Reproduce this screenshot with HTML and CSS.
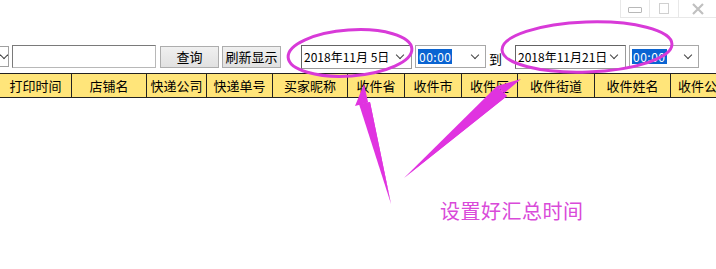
FILE: index.html
```html
<!DOCTYPE html>
<html>
<head>
<meta charset="utf-8">
<link rel="stylesheet" href="styles.css">
</head>
<body>
<div class="page">
  <div class="titlebar">
    <div class="winbtns">
      <div class="wb"><span class="min"></span></div>
      <div class="wb"><span class="rest"></span></div>
      <div class="wb wclose">
        <svg width="14" height="12" viewBox="0 0 14 12"><path d="M2 1 L12 11 M12 1 L2 11" stroke="#c0c0c0" stroke-width="2.2" fill="none"/></svg>
      </div>
    </div>
  </div>
  <div class="toolbar">
    <div class="stub"><span class="chev"></span></div>
    <div class="input"></div>
    <div class="btn b1">查询</div>
    <div class="btn b2">刷新显示</div>
    <div class="date d1"><span class="dtext">2018年11月&nbsp;5日</span><span class="chev"></span></div>
    <div class="time t1"><span class="sel">00:00</span><span class="chev"></span></div>
    <div class="to">到</div>
    <div class="date d2"><span class="dtext">2018年11月21日</span><span class="chev"></span></div>
    <div class="time t2"><span class="sel">00:00</span><span class="chev"></span></div>
  </div>
  <div class="header">
    <div class="hc" style="width:72px">打印时间</div>
    <div class="hc" style="width:75px">店铺名</div>
    <div class="hc" style="width:60px">快递公司</div>
    <div class="hc" style="width:66px">快递单号</div>
    <div class="hc" style="width:75px">买家昵称</div>
    <div class="hc" style="width:57px">收件省</div>
    <div class="hc" style="width:57px">收件市</div>
    <div class="hc" style="width:56px">收件区</div>
    <div class="hc" style="width:77px">收件街道</div>
    <div class="hc" style="width:76px">收件姓名</div>
    <div class="hc last" style="width:80px">收件公司</div>
  </div>
  <svg class="anno" width="716" height="269" viewBox="0 0 716 269">
    <ellipse cx="350" cy="53" rx="62" ry="23" fill="none" stroke="#d83ad8" stroke-width="3" transform="rotate(-4 350 53)"/>
    <ellipse cx="587" cy="47" rx="85" ry="25" fill="none" stroke="#d83ad8" stroke-width="3" transform="rotate(-2 587 47)"/>
    <polygon points="391,204 364,84 355,106 370,102" fill="#e033e0"/>
    <polygon points="391,204 370,102 359,104" fill="#e033e0"/>
    <polygon points="404,178 521,79 497,86 507,96" fill="#e033e0"/>
    <polygon points="404,178 507,96 497,86" fill="#e033e0"/>
  </svg>
  <div class="note">设置好汇总时间</div>
</div>
</body>
</html>
```
FILE: styles.css
```css
html, body {
  margin: 0;
  padding: 0;
  background: #ffffff;
}
.page {
  position: relative;
  width: 716px;
  height: 269px;
  overflow: hidden;
  font-family: "Noto Sans CJK SC", "DejaVu Sans", sans-serif;
  font-size: 12px;
  color: #000;
}
.titlebar {
  height: 18px;
  display: flex;
  justify-content: flex-end;
}
.winbtns {
  display: flex;
  width: 95px;
  height: 17px;
  border-left: 1px solid #e8e8e8;
  border-bottom: 1px solid #e8e8e8;
}
.wb {
  flex: 1;
  display: flex;
  align-items: center;
  justify-content: center;
  border-right: 1px solid #e8e8e8;
}
.wb.wclose { flex: 1.3; border-right: none; }
.min {
  width: 12px;
  height: 4px;
  border: 1px solid #b8b8b8;
  border-radius: 1px;
  margin-top: 3px;
}
.rest {
  width: 8px;
  height: 9px;
  border: 1px solid #d0d0d0;
}
.toolbar {
  display: flex;
  align-items: center;
  height: 25px;
  margin-top: 26px;
}
.chev {
  display: inline-block;
  width: 5px;
  height: 5px;
  border-right: 1px solid #444;
  border-bottom: 1px solid #444;
  transform: rotate(45deg);
  margin-top: -4px;
}
.stub {
  width: 9px;
  height: 21px;
  border: 1px solid #a0a0a0;
  border-left: none;
  display: flex;
  align-items: center;
  justify-content: flex-end;
  overflow: hidden;
  box-sizing: border-box;
}
.stub .chev { margin-right: 1px; }
.input {
  width: 144px;
  height: 23px;
  margin-left: 3px;
  box-sizing: border-box;
  border: 1px solid #7a7a7a;
  border-right-color: #b8b8b8;
  border-bottom-color: #b8b8b8;
  background: #fff;
}
.btn {
  height: 22px;
  box-sizing: border-box;
  border: 1px solid #adadad;
  background: linear-gradient(#f0f0f0, #e1e1e1);
  display: flex;
  align-items: center;
  justify-content: center;
  font-size: 13px;
}
.b1 { width: 59px; margin-left: 4px; }
.b2 { width: 59px; margin-left: 3px; }
.date {
  height: 24px;
  box-sizing: border-box;
  border: 1px solid #646464;
  border-right-color: #9a9a9a;
  border-bottom-color: #9a9a9a;
  display: flex;
  align-items: center;
  justify-content: space-between;
  padding: 0 8px 0 2px;
  background: #fff;
  font-size: 12px;
}
.d1 { width: 111px; margin-left: 20px; }
.d2 { width: 111px; margin-left: 13px; }
.time {
  height: 23px;
  box-sizing: border-box;
  border: 1px solid #a8a8a8;
  display: flex;
  align-items: center;
  justify-content: space-between;
  padding: 0 7px 0 2px;
  background: #fff;
}
.t1 { width: 71px; margin-left: 3px; }
.t2 { width: 70px; margin-left: 3px; }
.sel {
  background: #0a64d2;
  color: #fff;
  font-size: 12px;
  line-height: 15px;
  padding: 0 1px;
  letter-spacing: 0.5px;
}
.to {
  margin-left: 3px;
  font-size: 13px;
  margin-top: 4px;
}
.header {
  display: flex;
  margin-top: 4px;
  height: 25px;
  border-top: 1px solid #222;
  border-bottom: 1px solid #222;
  background: #ffe57a;
  box-sizing: border-box;
  white-space: nowrap;
}
.hc {
  flex: none;
  box-sizing: border-box;
  border-right: 1px solid #222;
  display: flex;
  align-items: center;
  justify-content: center;
  font-size: 13px;
  overflow: hidden;
}
.hc.last { justify-content: flex-start; padding-left: 7px; border-right: none; }
.anno {
  position: absolute;
  left: 0;
  top: 0;
  pointer-events: none;
}
.note {
  position: absolute;
  left: 440px;
  top: 196px;
  font-size: 20px;
  color: #d94ad9;
  letter-spacing: 0.5px;
}
```
